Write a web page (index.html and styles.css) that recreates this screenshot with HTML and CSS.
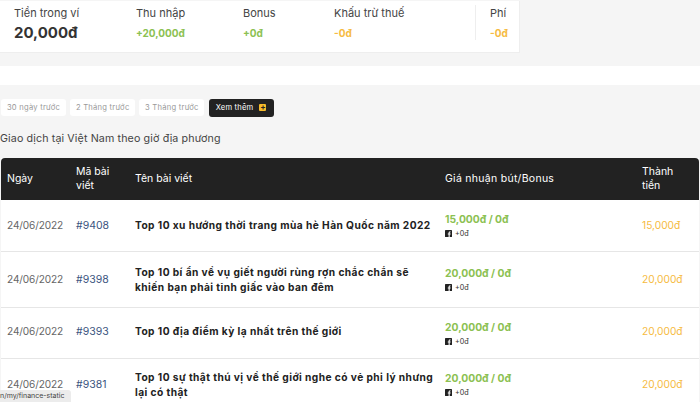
FILE: index.html
```html
<!DOCTYPE html>
<html lang="vi">
<head>
<meta charset="utf-8">
<title>Finance</title>
<link rel="stylesheet" href="styles.css">
</head>
<body>
<div class="page">
  <section class="summary">
    <div class="stat stat-wallet"><div class="stat-label">Tiền trong ví</div><div class="stat-total">20,000đ</div></div>
    <div class="stat stat-income"><div class="stat-label">Thu nhập</div><div class="stat-value plus">+20,000đ</div></div>
    <div class="stat stat-bonus"><div class="stat-label">Bonus</div><div class="stat-value plus">+0đ</div></div>
    <div class="stat stat-tax"><div class="stat-label">Khấu trừ thuế</div><div class="stat-value minus">-0đ</div></div>
    <div class="stat stat-fee"><div class="stat-label">Phí</div><div class="stat-value minus">-0đ</div></div>
  </section>
  <div class="band"></div>
  <section class="content">
    <div class="filters">
      <a class="chip">30 ngày trước</a>
      <a class="chip">2 Tháng trước</a>
      <a class="chip">3 Tháng trước</a>
      <a class="chip chip-dark">Xem thêm <span class="plus-box">+</span></a>
    </div>
    <p class="note">Giao dịch tại Việt Nam theo giờ địa phương</p>
    <table class="ledger">
      <colgroup><col class="c1"><col class="c2"><col class="c3"><col class="c4"><col class="c5"></colgroup>
      <thead>
        <tr><th>Ngày</th><th>Mã bài viết</th><th>Tên bài viết</th><th class="th-price">Giá nhuận bút/Bonus</th><th class="th-total">Thành tiền</th></tr>
      </thead>
      <tbody>
        <tr class="r1">
          <td class="date">24/06/2022</td><td class="code">#9408</td>
          <td class="title">Top 10 xu hướng thời trang mùa hè Hàn Quốc năm 2022</td>
          <td class="money"><div class="price">15,000đ / 0đ</div><div class="fb"><svg class="fb-icon" viewBox="0 0 7 7"><rect width="7" height="7" rx="0.6" fill="#222"/><path d="M4.7 7V4.4h.9l.1-1h-1v-.6c0-.3.1-.5.5-.5h.5v-.9H4.9c-.9 0-1.3.5-1.3 1.3v.7h-.8v1h.8V7z" fill="#fff"/></svg>+0đ</div></td>
          <td class="total">15,000đ</td>
        </tr>
        <tr class="r2">
          <td class="date">24/06/2022</td><td class="code">#9398</td>
          <td class="title">Top 10 bí ẩn về vụ giết người rùng rợn chắc chắn sẽ khiến bạn phải tỉnh giấc vào ban đêm</td>
          <td class="money"><div class="price">20,000đ / 0đ</div><div class="fb"><svg class="fb-icon" viewBox="0 0 7 7"><rect width="7" height="7" rx="0.6" fill="#222"/><path d="M4.7 7V4.4h.9l.1-1h-1v-.6c0-.3.1-.5.5-.5h.5v-.9H4.9c-.9 0-1.3.5-1.3 1.3v.7h-.8v1h.8V7z" fill="#fff"/></svg>+0đ</div></td>
          <td class="total">20,000đ</td>
        </tr>
        <tr class="r3">
          <td class="date">24/06/2022</td><td class="code">#9393</td>
          <td class="title">Top 10 địa điểm kỳ lạ nhất trên thế giới</td>
          <td class="money"><div class="price">20,000đ / 0đ</div><div class="fb"><svg class="fb-icon" viewBox="0 0 7 7"><rect width="7" height="7" rx="0.6" fill="#222"/><path d="M4.7 7V4.4h.9l.1-1h-1v-.6c0-.3.1-.5.5-.5h.5v-.9H4.9c-.9 0-1.3.5-1.3 1.3v.7h-.8v1h.8V7z" fill="#fff"/></svg>+0đ</div></td>
          <td class="total">20,000đ</td>
        </tr>
        <tr class="r4">
          <td class="date">24/06/2022</td><td class="code">#9381</td>
          <td class="title">Top 10 sự thật thú vị về thế giới nghe có vẻ phi lý nhưng lại có thật</td>
          <td class="money"><div class="price">20,000đ / 0đ</div><div class="fb"><svg class="fb-icon" viewBox="0 0 7 7"><rect width="7" height="7" rx="0.6" fill="#222"/><path d="M4.7 7V4.4h.9l.1-1h-1v-.6c0-.3.1-.5.5-.5h.5v-.9H4.9c-.9 0-1.3.5-1.3 1.3v.7h-.8v1h.8V7z" fill="#fff"/></svg>+0đ</div></td>
          <td class="total">20,000đ</td>
        </tr>
      </tbody>
    </table>
  </section>
</div>
<div class="status-url">n/my/finance-static</div>
</body>
</html>
```
FILE: styles.css
```css
* { box-sizing: border-box; }
html, body { margin: 0; height: 100%; overflow: hidden; }
body { background: #f5f5f5; font-family: Inter, "Open Sans", sans-serif; color: #333; }
.page { height: 402px; overflow: hidden; padding-top: 1px; }

.summary { display: flex; width: 520px; height: 52px; background: #fff; border-bottom: 1px solid #eee; border-right: 1px solid #eee; padding-top: 4px; }
.stat { white-space: nowrap; }
.stat-wallet { width: 136px; padding-left: 14px; }
.stat-income { width: 107px; }
.stat-bonus { width: 91px; }
.stat-tax { width: 142px; border-right: 1px solid #eee; height: 35px; }
.stat-fee { padding-left: 14px; }
.stat-label { font-size: 11px; line-height: 16px; color: #444; }
.stat-total { font-size: 15px; line-height: 22px; margin-top: 1px; font-weight: 700; color: #333; }
.stat-value { font-size: 10px; line-height: 22px; margin-top: 1px; font-weight: 700; }
.plus { color: #8cc152; }
.minus { color: #f6bb42; }

.band { height: 19px; margin-top: 13px; background: #fff; }

.content { padding-top: 13px; }
.filters { display: flex; gap: 4.2px; padding-left: 1px; align-items: center; height: 19px; }
.chip { display: flex; align-items: center; gap: 6px; width: 65px; height: 17px; justify-content: center; background: #fff; border-radius: 3px; font-size: 7.6px; letter-spacing: 0.25px; color: #999; white-space: nowrap; }
.chip-dark { height: 18px; background: #222; color: #fff; letter-spacing: 0.2px; }
.plus-box { display: inline-block; width: 7px; height: 7px; background: #f6bb2a; color: #222; font-size: 8px; line-height: 7px; text-align: center; font-weight: 700; border-radius: 1px; }
.note { margin: 14px 0 0; height: 27px; font-size: 10.7px; line-height: 16px; letter-spacing: 0.12px; color: #444; white-space: nowrap; }

.ledger { width: 698px; margin-left: 1px; border-collapse: separate; border-spacing: 0; table-layout: fixed; background: #fff; }
.c1 { width: 69px; } .c2 { width: 59px; } .c3 { width: 310px; } .c4 { width: 197px; } .c5 { width: 63px; }
.ledger th { background: #222; color: #fff; font-weight: 400; font-size: 10.5px; line-height: 14px; height: 42px; text-align: left; padding: 0 0 0 6px; vertical-align: middle; }
.ledger th:first-child { border-top-left-radius: 4px; }
.ledger th:last-child { border-top-right-radius: 4px; }
.ledger th.th-price { letter-spacing: 0.28px; }
.ledger th.th-total { padding-right: 20px; }
.ledger td { font-size: 10.5px; line-height: 15px; padding: 0 0 0 6px; vertical-align: middle; color: #666; border-bottom: 1px solid #e6e6e6; }
.r1 td { height: 52px; } .r2 td { height: 56px; } .r3 td { height: 51px; } .r4 td { height: 52px; }
.r3 td:not(.money) { padding-bottom: 3px; }
.ledger td.date { font-size: 10.1px; letter-spacing: -0.12px; }
.ledger td.code { color: #3b5480; }
.ledger td.title { color: #222; font-weight: 700; font-size: 10.2px; letter-spacing: 0.43px; }
.ledger td.total { color: #f6bb42; font-size: 10.2px; }
.price { color: #8cc152; font-size: 10.3px; font-weight: 700; line-height: 15px; }
.fb { display: flex; align-items: center; gap: 3px; font-size: 7.2px; line-height: 11px; color: #333; margin-top: 1px; }
.fb-icon { width: 7px; height: 7px; display: block; }

.status-url { position: absolute; left: 0; bottom: 0; width: 71px; height: 12px; background: #ececec; border-top-right-radius: 3px; font-size: 7px; line-height: 12px; color: #444; white-space: nowrap; overflow: hidden; }
```
